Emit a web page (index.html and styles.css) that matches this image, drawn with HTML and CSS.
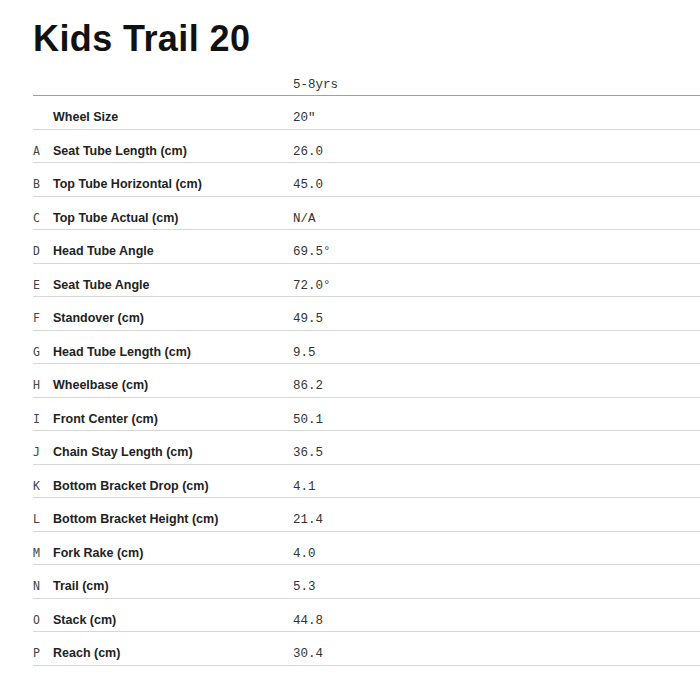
FILE: index.html
```html
<!DOCTYPE html>
<html lang="en">
<head>
<meta charset="utf-8">
<title>Kids Trail 20</title>
<link rel="stylesheet" href="styles.css">
</head>
<body>
<main class="page">
  <h1 class="title">Kids Trail 20</h1>
  <div class="geo">
    <div class="row head">
      <span class="key"></span>
      <span class="label"></span>
      <span class="val">5-8yrs</span>
    </div>
    <div class="row"><span class="key"></span><span class="label">Wheel Size</span><span class="val">20"</span></div>
    <div class="row"><span class="key">A</span><span class="label">Seat Tube Length (cm)</span><span class="val">26.0</span></div>
    <div class="row"><span class="key">B</span><span class="label">Top Tube Horizontal (cm)</span><span class="val">45.0</span></div>
    <div class="row"><span class="key">C</span><span class="label">Top Tube Actual (cm)</span><span class="val">N/A</span></div>
    <div class="row"><span class="key">D</span><span class="label">Head Tube Angle</span><span class="val">69.5°</span></div>
    <div class="row"><span class="key">E</span><span class="label">Seat Tube Angle</span><span class="val">72.0°</span></div>
    <div class="row"><span class="key">F</span><span class="label">Standover (cm)</span><span class="val">49.5</span></div>
    <div class="row"><span class="key">G</span><span class="label">Head Tube Length (cm)</span><span class="val">9.5</span></div>
    <div class="row"><span class="key">H</span><span class="label">Wheelbase (cm)</span><span class="val">86.2</span></div>
    <div class="row"><span class="key">I</span><span class="label">Front Center (cm)</span><span class="val">50.1</span></div>
    <div class="row"><span class="key">J</span><span class="label">Chain Stay Length (cm)</span><span class="val">36.5</span></div>
    <div class="row"><span class="key">K</span><span class="label">Bottom Bracket Drop (cm)</span><span class="val">4.1</span></div>
    <div class="row"><span class="key">L</span><span class="label">Bottom Bracket Height (cm)</span><span class="val">21.4</span></div>
    <div class="row"><span class="key">M</span><span class="label">Fork Rake (cm)</span><span class="val">4.0</span></div>
    <div class="row"><span class="key">N</span><span class="label">Trail (cm)</span><span class="val">5.3</span></div>
    <div class="row"><span class="key">O</span><span class="label">Stack (cm)</span><span class="val">44.8</span></div>
    <div class="row"><span class="key">P</span><span class="label">Reach (cm)</span><span class="val">30.4</span></div>
  </div>
</main>
</body>
</html>
```
FILE: styles.css
```css
html, body {
  margin: 0;
  padding: 0;
  background: #fff;
  overflow: hidden;
}
.page {
  padding: 21px 0 0 33px;
  font-family: "Liberation Sans", Arial, sans-serif;
  color: #1a1a1a;
}
.title {
  margin: 0;
  font-size: 36px;
  line-height: 36px;
  font-weight: 700;
  letter-spacing: 0.4px;
  color: #111;
}
.geo {
  width: 700px;
}
.row {
  display: grid;
  grid-template-columns: 20px 240px 1fr;
  align-items: baseline;
  height: 33.5px;
  padding-top: 14px;
  box-sizing: border-box;
  border-bottom: 1px solid #d6d6d6;
}
.row > span {
  line-height: 15px;
}
.row.head {
  height: 39px;
  padding-top: 21px;
  border-bottom: 1.5px solid #a0a0a0;
}
.key {
  font-family: "DejaVu Sans Mono", "Liberation Mono", monospace;
  font-size: 11.5px;
  color: #444;
}
.label {
  font-size: 12.5px;
  font-weight: 700;
  color: #222;
}
.val {
  font-family: "Liberation Mono", "DejaVu Sans Mono", monospace;
  font-size: 12.5px;
  color: #333;
}
```
